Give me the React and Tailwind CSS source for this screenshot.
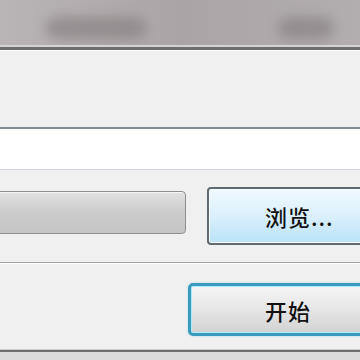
export default function App() {
  const font = { fontFamily: '"Noto Sans CJK SC", "Noto Sans", sans-serif' };
  return (
    <div className="w-[360px] h-[360px] overflow-hidden bg-[#f0f0f0] flex flex-col" style={font}>
      {/* title bar */}
      <div className="h-[45px] shrink-0 bg-gradient-to-r from-[#b9b4b5] via-[#aaa4a6] to-[#b2adae] flex items-center overflow-hidden">
        <div className="ml-[46px] mt-[10px] w-[100px] h-[22px] rounded-full bg-[#8a8284] blur-[6px] opacity-70" />
        <div className="ml-[132px] mt-[10px] w-[56px] h-[22px] rounded-full bg-[#888284] blur-[6px] opacity-70" />
      </div>
      <div className="h-[2px] shrink-0 bg-[#d4d2d2]" />
      <div className="h-[3px] shrink-0 bg-[#6e6e70]" />
      <div className="h-[1px] shrink-0 bg-[#fafafa]" />

      {/* text input */}
      <div className="mt-[76px] h-[43px] shrink-0 w-full bg-white border-t-2 border-[#7f8d99] border-b border-b-[#cfd5da]" />

      {/* row */}
      <div className="mt-[17px] h-[58px] shrink-0 flex items-center">
        <div className="ml-[-6px] w-[192px] h-[43px] mt-[-8px] rounded-[4px] border border-[#8e8e8e] bg-gradient-to-b from-[#e2e2e2] via-[#cbcbcb] to-[#c6c6c6] shadow-[inset_0_1px_0_#f4f4f4]" />
        <div className="ml-[21px] mr-[-40px] flex-1 h-[58px] rounded-[4px] border-2 border-[#5f6a72] bg-gradient-to-b from-[#f0f9fe] via-[#dbf0fc] to-[#b9e2f8] flex items-center pl-[56px] shadow-[inset_0_0_0_1px_#f6fcff]">
          <span className="text-[22px] leading-none text-[#111] font-medium tracking-[1px]">浏览...</span>
        </div>
      </div>

      {/* separator */}
      <div className="mt-[17px] h-[1px] shrink-0 bg-[#a2a2a2]" />
      <div className="h-[1px] shrink-0 bg-white" />

      {/* start button */}
      <div className="mt-[19px] h-[53px] shrink-0 flex">
        <div className="ml-[188px] mr-[-40px] flex-1 rounded-[5px] border-[3px] border-[#3a9bbd] bg-gradient-to-b from-[#f6f6f6] via-[#e6e6e6] to-[#d2d2d2] flex items-center pl-[74px] shadow-[inset_0_0_0_1px_#a8ecfb,0_0_2px_#9fd8ea]">
          <span className="text-[22px] leading-none text-[#111] font-medium tracking-[1px]">开始</span>
        </div>
      </div>

      {/* bottom */}
      <div className="mt-[13px] h-[1px] shrink-0 bg-[#c9c9c9]" />
      <div className="h-[2px] shrink-0 bg-[#6f6f6f]" />
      <div className="flex-1 bg-[#dcdcdc]" />
    </div>
  );
}
